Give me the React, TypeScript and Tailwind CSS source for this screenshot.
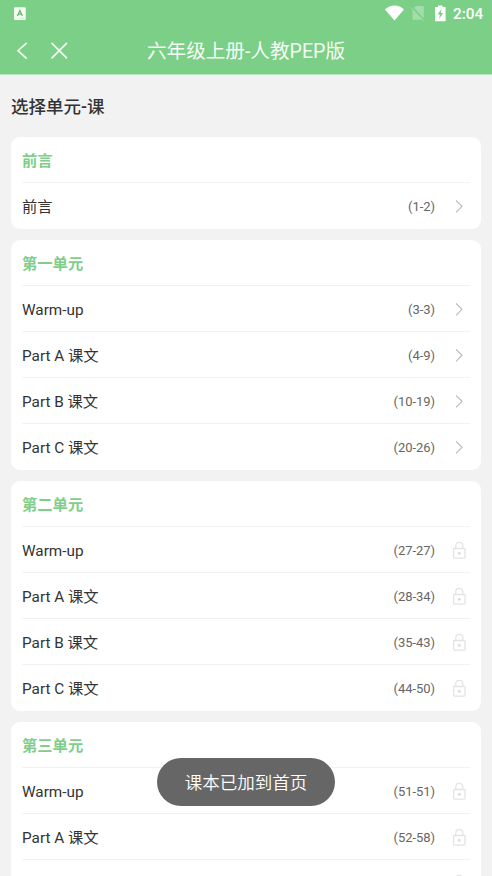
type Lesson = { name: string; pages: string };
type Unit = { title: string; locked: boolean; lessons: Lesson[] };

const units: Unit[] = [
  { title: '前言', locked: false, lessons: [{ name: '前言', pages: '(1-2)' }] },
  {
    title: '第一单元',
    locked: false,
    lessons: [
      { name: 'Warm-up', pages: '(3-3)' },
      { name: 'Part A 课文', pages: '(4-9)' },
      { name: 'Part B 课文', pages: '(10-19)' },
      { name: 'Part C 课文', pages: '(20-26)' },
    ],
  },
  {
    title: '第二单元',
    locked: true,
    lessons: [
      { name: 'Warm-up', pages: '(27-27)' },
      { name: 'Part A 课文', pages: '(28-34)' },
      { name: 'Part B 课文', pages: '(35-43)' },
      { name: 'Part C 课文', pages: '(44-50)' },
    ],
  },
  {
    title: '第三单元',
    locked: true,
    lessons: [
      { name: 'Warm-up', pages: '(51-51)' },
      { name: 'Part A 课文', pages: '(52-58)' },
      { name: 'Part B 课文', pages: '(59-67)' },
    ],
  },
];

function Chevron() {
  return (
    <svg width="14" height="18" viewBox="0 0 14 18" fill="none" stroke="#b8b8b8" strokeWidth="1.1">
      <path d="M4 3.3 L10 9.3 L4 15.3" />
    </svg>
  );
}

function Lock() {
  return (
    <svg width="14" height="18" viewBox="0 0 14 18" fill="none" stroke="#e4e4e4" strokeWidth="1.3">
      <rect x="1.6" y="7.5" width="11.4" height="9.6" rx="0.8" />
      <path d="M3.8 7.5 V4.8 C3.8 2.7 5.3 1.3 7.3 1.3 S10.8 2.7 10.8 4.8 V7.5" />
      <circle cx="7.3" cy="12.3" r="1.5" fill="#dedede" stroke="none" />
    </svg>
  );
}

function StatusBar() {
  return (
    <div className="flex h-[28px] items-center justify-between pl-[14px] pr-[9px]">
      <svg width="12" height="14" viewBox="0 0 12 14">
        <rect x="0" y="0.2" width="11.8" height="12.8" rx="1.2" fill="#f3fbf3" />
        <path d="M3.4 9 L5.9 3.5 L8.4 9 M4.4 7.2 H7.4" fill="none" stroke="#67b873" strokeWidth="1.3" />
        <path d="M6 11.3 H10" stroke="#b6e0bb" strokeWidth="0.9" strokeDasharray="1 0.5" />
      </svg>
      <div className="flex items-center">
        <svg width="65" height="18" viewBox="0 0 65 18">
          <path d="M0 4.4 C5.2 -0.7 13.8 -0.7 19 4.4 L9.5 15.6 Z" fill="#fff" />
          <path d="M31 1 H37.5 C38.3 1 38.8 1.5 38.8 2.3 V14.8 H27.5 V4.5 Z" fill="#a3ddaa" />
          <path d="M26.2 1.8 L39.8 16" stroke="#7bcf86" strokeWidth="2.3" />
          <path d="M26 2.8 L39 16.2" stroke="#a3ddaa" strokeWidth="1" />
          <path d="M50 2 H53 V0.4 H57.6 V2 H60.6 V16.2 H50 Z" fill="#fff" />
          <path d="M56.4 4 L52.6 9.6 H54.9 L54.2 13.8 L58.2 8 H55.8 Z" fill="#7bcf86" />
        </svg>
        <span className="w-[33px] pl-[3px] text-[15.3px] font-medium leading-[28px] text-white">2:04</span>
      </div>
    </div>
  );
}

function UnitCard({ unit }: { unit: Unit }) {
  return (
    <section className="rounded-[9px] bg-white px-[11px]">
      <h2 className="flex h-[46px] items-center border-b border-[#f2f2f2] pt-[4px] text-[15.3px] font-bold text-[#7fce8a]">
        {unit.title}
      </h2>
      {unit.lessons.map((lesson) => (
        <div
          key={lesson.name}
          className="flex h-[46px] items-center border-b border-[#f2f2f2] text-[15.3px] text-[#333] last:border-transparent"
        >
          <span className="flex-1 pt-[4px]">{lesson.name}</span>
          <span className="mr-[17px] pt-[2px] text-[13px] tracking-[-0.05px] text-[#666]">{lesson.pages}</span>
          <span className="mr-[4px]">{unit.locked ? <Lock /> : <Chevron />}</span>
        </div>
      ))}
    </section>
  );
}

export default function App() {
  return (
    <div className="relative h-[876px] w-[492px] overflow-hidden bg-[#f2f2f2] font-[Roboto,'Noto_Sans_CJK_SC',sans-serif]">
      <header className="h-[75px] border-b border-[#b9e5be] bg-[#7bcf86]">
        <StatusBar />
        <div className="grid h-[46px] grid-cols-[100px_1fr_100px] items-center">
          <div className="flex items-center pl-[15px]">
            <svg width="56" height="20" viewBox="0 0 56 20" fill="none" stroke="#f1fbf2" strokeWidth="1.7">
              <path d="M11.7 1.8 L3 9.7 L11.7 17.6" />
              <path d="M36.5 1.8 L52 17.3 M52 1.8 L36.5 17.3" />
            </svg>
          </div>
          <h1 className="whitespace-nowrap pt-[2px] text-center text-[19.6px] font-normal leading-[44px] text-[#f4fcf5]">
            六年级上册-人教PEP版
          </h1>
        </div>
      </header>
      <main className="px-[11px]">
        <div className="flex h-[62px] items-center pt-[2px] text-[17.5px] font-medium text-[#333]">选择单元-课</div>
        <div className="flex flex-col gap-[11px]">
          {units.map((unit) => (
            <UnitCard key={unit.title} unit={unit} />
          ))}
        </div>
      </main>
      <div
        role="status"
        className="absolute left-[157px] top-[758px] flex h-[48px] w-[178px] items-center justify-center rounded-full bg-[#666] pt-[2px] text-[17.5px] font-[350] text-white"
      >
        课本已加到首页
      </div>
    </div>
  );
}
